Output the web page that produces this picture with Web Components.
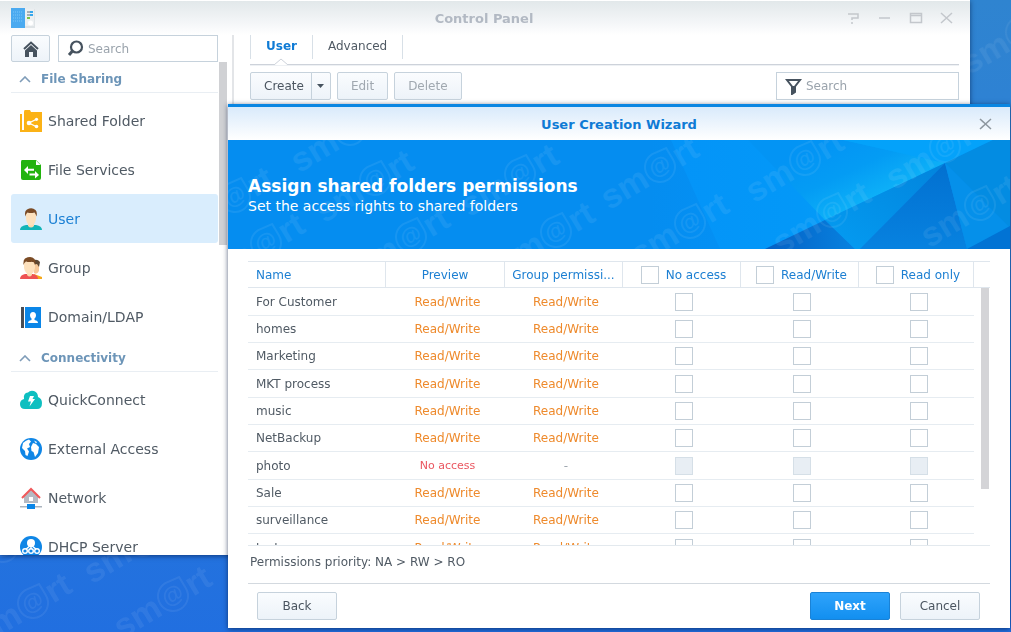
<!DOCTYPE html>
<html lang="en">
<head>
<meta charset="utf-8">
<meta name="viewport" content="width=device-width, initial-scale=1">
<title>Control Panel</title>
<style>
  html, body { margin: 0; height: 100%; }
  body {
    font-family: "DejaVu Sans", Verdana, sans-serif;
    font-size: 12px;
    color: #505a64;
    overflow: hidden;
  }
</style>
</head>
<body>
<desk-top>
  <control-panel>
    <side-group slot="nav" label="File Sharing">
      <side-item icon="folder">Shared Folder</side-item>
      <side-item icon="services">File Services</side-item>
      <side-item icon="user" active>User</side-item>
      <side-item icon="group">Group</side-item>
      <side-item icon="domain">Domain/LDAP</side-item>
    </side-group>
    <side-group slot="nav" label="Connectivity">
      <side-item icon="cloud">QuickConnect</side-item>
      <side-item icon="globe">External Access</side-item>
      <side-item icon="network">Network</side-item>
      <side-item icon="dhcp">DHCP Server</side-item>
    </side-group>
    <tab-strip slot="main"></tab-strip>
    <tool-bar slot="main"></tool-bar>
  </control-panel>
  <wizard-dialog>
    <wizard-banner slot="banner">
      <span slot="title">Assign shared folders permissions</span>
      <span slot="text">Set the access rights to shared folders</span>
    </wizard-banner>
    <permission-table></permission-table>
    <span slot="note">Permissions priority: NA &gt; RW &gt; RO</span>
    <ui-button slot="back" wide>Back</ui-button>
    <ui-button slot="next" wide primary>Next</ui-button>
    <ui-button slot="next" wide>Cancel</ui-button>
  </wizard-dialog>
</desk-top>

<script>
const define = (name, markup, setup) => {
  const template = document.createElement('template');
  template.innerHTML = markup;
  customElements.define(name, class extends HTMLElement {
    constructor() {
      super();
      this.attachShadow({ mode: 'open' }).append(template.content.cloneNode(true));
    }
    connectedCallback() {
      if (setup && !this.ready) setup(this, this.shadowRoot);
      this.ready = true;
    }
  });
};

const ICONS = {
  folder: '<path fill="#fbb216" d="M4 2q0-2 1-2h5l1 2h11v20H4z"/><path fill="#fbb216" d="M0 4h2v16h2v2H0z"/><path fill="#fff" opacity=".5" d="M2 4h1v15H2z"/><path stroke="#fff" stroke-width="1.3" d="M17 9l-8 4 8 4"/><g fill="#fff"><circle cx="9" cy="13" r="2.3"/><circle cx="16.500" cy="9.300" r="1.600"/><circle cx="16.500" cy="16.500" r="1.800"/></g>',
  services: '<path fill="#22b30e" d="M2 1h14l5 5v13q0 2-2 2H3q-2 0-2-2V3q0-2 1-2z"/><path fill="#fff" d="M16 1.500l4.500 4.500H16z"/><path fill="#fff" d="M4 11l4-4v2.800h6v2H8V15zM19 16l-4-4v2.600H9.500v2H15v3z"/>',
  user: '<path fill="#12b5b8" d="M0 22q0-4 6-5h10q6 1 6 5z"/><path fill="#fbd9ad" d="M8 14h6v4q-3 3-6 0z"/><path fill="#fde1bd" d="M6 5h10v6q-1 6-5 6.500Q7 17 6 11z"/><path fill="#7b4b25" d="M5.500 8.500Q4 3 7 1.500q5-2.500 8.500.5Q17.500 4 16.500 8.500q-1-3-2-4-4 1-7 0-1.500 1-2 4z"/>',
  group: '<path fill="#f5a91c" d="M14 17l8 3v2h-8z"/><path fill="#f6c899" d="M12 6h7v8q-2 4-5 2z"/><path fill="#5b4633" d="M12 4q5-3 8 1l-1 5-2-3-5 1z"/><path fill="#ee5252" d="M0 22q0-4 5-5h8q5 1 5 5z"/><path fill="#fbd9ad" d="M7 14h5v4q-2.500 3-5 0z"/><path fill="#fde1bd" d="M4 5h11v6q-1 5.500-5.500 6.500Q5 16.500 4 11z"/><path fill="#7b4b25" d="M3.500 8Q3 3 5 1.500q6-3 9.500.5Q16 4 15 8q-1-3-2-3.500-4 1-7 0Q4 5.500 3.500 8z"/>',
  domain: '<path fill="#484d54" d="M1 1h3v21H1z"/><path fill="#0a86e8" d="M5 1h16v21H5z"/><path fill="#fff" d="M13 6q3 0 3 3.500 0 2-1.500 3v1.500q3.500.5 3.500 3H8q0-2.500 3.500-3v-1.500q-1.500-1-1.500-3Q10 6 13 6z"/>',
  cloud: '<path fill="#0ebfc0" d="M5 20q-5 0-5-5 0-4 4-5Q3 4 8 3.500 10 1 14 2q4 1.500 4 6 4 1.500 4 6 0 6-5 6z"/><path fill="#fff" d="M10 7h4l-1.500 3H15l-5.500 7.500 1.500-5H8z"/>',
  globe: '<circle cx="11" cy="11" r="11" fill="#0f86e6"/><path fill="#fff" d="M3 5q3-3 6-3.500l2 2L9 6l1 3-3 1.500 2 3-1.500 4.500-2-1-.5-4L2 10zM13 5l3 1 3 3-1 6-3 4-1.500-5-2-1-.5-4zM14 2.500l3 1.500-1 1.500z"/>',
  network: '<path fill="#b5bac3" d="M4 8l7-6 7 6v8H4z"/><path fill="#fff" d="M9 10h4v4H9z"/><path fill="none" stroke="#f0595b" stroke-width="2" d="M2 11l9-9 9 9"/><path fill="#aab4be" d="M0 19h22v1.500H0z"/><path fill="#0a86e8" d="M7 17h8v5H7z"/>',
  dhcp: '<circle cx="11" cy="11" r="11" fill="#0f86e6"/><path fill="none" stroke="#fff" stroke-width="1.500" d="M11 8v8M11 9l-6 5M11 9l6 5"/><g fill="#fff"><circle cx="11" cy="7" r="4"/></g><g fill="#0f86e6" stroke="#fff" stroke-width="1.400"><circle cx="5" cy="15" r="2.300"/><circle cx="11" cy="15" r="2.300"/><circle cx="17" cy="15" r="2.300"/></g>'
};

/* Brand mark laid over a blue surface; "at" lists the centre of each mark. */
define('brand-pattern', `
  <style>
    :host { position: absolute; inset: 0; overflow: hidden; pointer-events: none; }
    svg { display: block; width: 100%; height: 100%; }
    text { font: bold 34px "Liberation Sans", Arial, sans-serif; }
    .at { font-size: 22px; }
  </style>
  <svg aria-hidden="true"><g fill="#fff" opacity=".07"></g></svg>`,
(host, root) => {
  root.querySelector('g').innerHTML = host.getAttribute('at').split(' ').map(point =>
    `<g transform="translate(${point}) rotate(-31)"><text x="-17" y="11" text-anchor="end">sm</text><text class="at" x="0" y="6" text-anchor="middle">@</text><path d="M0-15L15-13V0A15 15 0 1 1 0-15z" fill="none" stroke="#fff" stroke-width="2"/><text x="17" y="11">rt</text></g>`).join('');
});

define('desk-top', `
  <style>
    :host { display: block; position: relative; height: 100vh; overflow: hidden;
      background: linear-gradient(#2f84d0, #2d80d6 30%, #216fe0); }
  </style>
  <brand-pattern at="3,547 33,603 143,541 173,596 1021,32"></brand-pattern>
  <slot></slot>`);

define('ui-button', `
  <style>
    :host { display: block; }
    button { box-sizing: border-box; height: 28px; margin: 0; padding: 0 13px; display: block; width: 100%;
      font: inherit; font-size: 12px; color: #4b5560; border: 1px solid #c6d2dc; border-radius: 2px;
      background: linear-gradient(#fafcfe, #edf3f9); white-space: nowrap; }
    button:disabled { color: #a0a8b0; }
    :host([wide]) { width: 80px; }
    :host([primary]) button { color: #fff; font-weight: bold; border-color: #1a82d6;
      background: linear-gradient(#2fa3fb, #128ff0); }
  </style>
  <button type="button"><slot></slot></button>`,
(host, root) => { root.querySelector('button').disabled = host.hasAttribute('disabled'); });

define('side-item', `
  <style>
    :host { display: block; }
    a { display: flex; align-items: center; gap: 6px; height: 49px; padding-left: 9px; border-radius: 3px;
      font-size: 14px; color: #505a64; text-decoration: none; white-space: nowrap; }
    svg { width: 22px; height: 22px; flex: none; }
    :host([active]) a { background: #d9edfd; color: #1c80d4; }
  </style>
  <a href="#"><svg viewBox="0 0 22 22" fill="none" aria-hidden="true"></svg><slot></slot></a>`,
(host, root) => { root.querySelector('svg').innerHTML = ICONS[host.getAttribute('icon')]; });

define('side-group', `
  <style>
    :host { display: block; }
    h2 { box-sizing: border-box; display: flex; align-items: center; gap: 10px; height: 31px; margin: 0 0 3px;
      padding: 4px 0 0 8px; border-bottom: 1px solid #e9eef3; font-size: 12px; color: #6d95b8; }
    svg { width: 12px; height: 7px; }
  </style>
  <h2><svg viewBox="0 0 12 7" fill="none" aria-hidden="true"><path d="M1 6l5-5 5 5" stroke="#7f9cb8" stroke-width="1.600"/></svg><span></span></h2>
  <nav><slot></slot></nav>`,
(host, root) => { root.querySelector('span').textContent = host.getAttribute('label'); });

define('search-box', `
  <style>
    :host { display: block; }
    label { box-sizing: border-box; display: flex; align-items: center; gap: 4px; height: 27px;
      padding: 0 8px; border: 1px solid #c6d2dc; background: #fff; }
    :host([icon=filter]) label { height: 28px; }
    svg { width: 17px; height: 17px; flex: none; }
    input { flex: 1; min-width: 0; border: 0; padding: 0; outline: 0; background: none; font: inherit; font-size: 12px; color: #505a64; }
    input::placeholder { color: #9aa3ac; opacity: 1; }
  </style>
  <label><svg viewBox="0 0 17 17" fill="none" stroke="#46525e" aria-hidden="true"></svg><input type="text" placeholder="Search" aria-label="Search"></label>`,
(host, root) => {
  root.querySelector('svg').innerHTML = host.getAttribute('icon') === 'filter'
    ? '<path stroke-width="2" d="M2 2h13l-5 6.500V14l-3 2V8.500z" fill="none"/><path fill="#46525e" stroke="none" d="M7 8h3v6l-3 2z"/>'
    : '<circle cx="9.500" cy="7" r="5.500" stroke-width="2.200"/><path stroke-width="3" d="M5.500 11L2 15"/>';
});

define('tab-strip', `
  <style>
    :host { display: block; position: relative; border-bottom: 1px solid #cdd2da; box-shadow: 0 1px 0 #eef1f4; height: 29px; }
    div { display: flex; height: 24px; }
    a { padding: 2px 15px; border-right: 1px solid #d8e0e7; font-size: 12px; line-height: 18px; color: #505a64; text-decoration: none; }
    a:first-child { border-left: 1px solid #d8e0e7; color: #0f7bd5; font-weight: bold; }
    svg { position: absolute; left: 24px; bottom: -1px; width: 14px; height: 7px; }
  </style>
  <div role="tablist"><a href="#" role="tab" aria-selected="true">User</a><a href="#" role="tab">Advanced</a></div>
  <svg viewBox="0 0 14 7" aria-hidden="true"><path fill="#fff" stroke="#cdd2da" d="M0 7l7-6 7 6"/></svg>`);

define('tool-bar', `
  <style>
    :host { display: flex; gap: 6px; padding-top: 7px; }
    .split { display: flex; }
    .split button { box-sizing: border-box; height: 28px; margin: 0; border: 1px solid #c6d2dc; padding: 0 7px 0 13px;
      background: linear-gradient(#fafcfe, #edf3f9); font: inherit; font-size: 12px; color: #4b5560; border-radius: 2px 0 0 2px; }
    .split .more { width: 20px; margin-left: -1px; padding: 0; border-radius: 0 2px 2px 0; display: grid; place-items: center; }
    .split svg { width: 7px; height: 4px; display: block; }
    search-box { width: 183px; margin-left: auto; }
  </style>
  <div class="split"><button type="button">Create</button><button class="more" type="button" aria-label="More create options"><svg viewBox="0 0 7 4"><path fill="#46525e" d="M0 0h7L3.500 4z"/></svg></button></div>
  <ui-button disabled>Edit</ui-button>
  <ui-button disabled>Delete</ui-button>
  <search-box icon="filter"></search-box>`);

define('control-panel', `
  <style>
    :host { position: absolute; inset: 0 41px 77px 0; display: flex; flex-direction: column; box-sizing: border-box;
      border-top: 1px solid #fff; background: linear-gradient(#e2e8ea, #f4f6f8 22px, #fff 34px);
      box-shadow: 0 1px 5px rgba(0, 20, 60, .6); }
    header { display: flex; align-items: center; height: 34px; flex: none; padding: 0 16px 0 11px; }
    .logo { width: 24px; height: 20px; }
    h1 { flex: 1; margin: 0; padding-left: 86px; text-align: center; font-size: 13px; color: #b2b9c3; }
    .tools { display: flex; gap: 17px; }
    .tools button { width: 14px; height: 14px; padding: 0; border: 0; background: none; display: block; }
    .tools svg { width: 14px; height: 14px; display: block; }
    .body { flex: 1; min-height: 0; display: flex; }
    aside { width: 217px; flex: none; display: flex; flex-direction: column; padding-left: 11px; }
    .find { display: flex; gap: 8px; padding-right: 10px; flex: none; }
    .find search-box { flex: 1; min-width: 0; }
    .home { box-sizing: border-box; width: 39px; flex: none; height: 27px; padding: 0; border: 1px solid #c6d2dc; border-radius: 2px;
      background: linear-gradient(#fafcfe, #edf3f9); display: grid; place-items: center; }
    .home svg { width: 16px; height: 16px; }
    .scroll { flex: 1; min-height: 0; display: flex; overflow: hidden; gap: 1px; }
    .groups { flex: 1; }
    .bar { width: 8px; height: 183px; margin-right: 1px; background: #d0d1d4; }
    main { flex: 1; min-width: 0; margin-left: 4px; border-left: 2px solid #e3e5e8; padding: 0 11px 0 16px; }
  </style>
  <header>
    <svg class="logo" viewBox="0 0 24 20" aria-hidden="true"><path fill="#dfe4e7" d="M14 1h10v19H14z"/><path fill="#eceff1" d="M14 1h9v17H14z"/><path fill="#4baaf0" d="M0 0h14v20H0z"/><path fill="none" stroke="#7cc6f8" stroke-dasharray="1 1" d="M2 4h10M2 7h10M2 10h10M2 13h10"/><path stroke="#67737c" d="M16 4h3M16 7h3"/><path stroke="#36a7ec" stroke-width="2" d="M19 4h3M19 7h3"/><path stroke="#7cc242" stroke-width="2" d="M16 10h3"/><circle cx="19.500" cy="15" r="2.500" fill="#fff"/></svg>
    <h1>Control Panel</h1>
    <div class="tools">
      <button type="button" aria-label="Help"><svg viewBox="0 0 14 14" fill="none" stroke="#c3c7cc" stroke-width="1.500"><path d="M1 3h10v4H5v2M5 11v2"/></svg></button>
      <button type="button" aria-label="Minimize"><svg viewBox="0 0 14 14" fill="none" stroke="#c3c7cc" stroke-width="1.500"><path d="M1 7h11"/></svg></button>
      <button type="button" aria-label="Maximize"><svg viewBox="0 0 14 14" fill="none" stroke="#c3c7cc" stroke-width="1.500"><path d="M1.500 2.500h11v9h-11zM1.500 4.500h11"/></svg></button>
      <button type="button" aria-label="Close"><svg viewBox="0 0 14 14" fill="none" stroke="#c3c7cc" stroke-width="1.500"><path d="M1 2l11 10M12 2L1 12"/></svg></button>
    </div>
  </header>
  <div class="body">
    <aside>
      <div class="find">
        <button class="home" type="button" aria-label="Home"><svg viewBox="0 0 16 16" aria-hidden="true"><path fill="none" stroke="#46525e" stroke-width="2" d="M1 8l7-6.500L15 8"/><path fill="#46525e" d="M2 9.500L8 4l6 5.500V16h-4v-5H6v5H2z"/></svg></button>
        <search-box></search-box>
      </div>
      <div class="scroll"><div class="groups"><slot name="nav"></slot></div><div class="bar"></div></div>
    </aside>
    <main><slot name="main"></slot></main>
  </div>`);

define('wizard-banner', `
  <style>
    :host { display: block; position: relative; height: 109px; overflow: hidden; background: #058df0; color: #fff; }
    .art { position: absolute; right: 0; top: 0; width: 360px; height: 109px; }
    .copy { position: relative; padding: 36px 20px 0; }
    h2, p { margin: 0; line-height: 20px; }
    h2 { font-size: 17px; }
    p { font-size: 14px; }
  </style>
  <svg class="art" viewBox="422 0 360 109" aria-hidden="true">
    <defs>
      <linearGradient id="z" x1="0" y1="0" x2="1" y2="0"><stop offset="0" stop-color="#058df0"/><stop offset="1" stop-color="#0490f4"/></linearGradient>
      <linearGradient id="a" x1="0" y1="0" x2="1" y2="0"><stop offset="0" stop-color="#0494f8"/><stop offset=".4" stop-color="#0398f8"/><stop offset=".8" stop-color="#06a8f6"/><stop offset="1" stop-color="#06a0f4"/></linearGradient>
      <linearGradient id="b" gradientUnits="userSpaceOnUse" x1="600" y1="0" x2="632" y2="68"><stop offset="0" stop-color="#0394f4"/><stop offset=".5" stop-color="#049cf4"/><stop offset="1" stop-color="#0eb2f8"/></linearGradient>
      <linearGradient id="c" x1="0" y1="0" x2="0" y2="1"><stop offset="0" stop-color="#0270d0"/><stop offset="1" stop-color="#0782e0"/></linearGradient>
      <linearGradient id="d" x1="0" y1="1" x2="1" y2="0"><stop offset="0" stop-color="#049cf2"/><stop offset="1" stop-color="#0284dc"/></linearGradient>
      <linearGradient id="e" x1="0" y1="0" x2="1" y2="0"><stop offset="0" stop-color="#0560c4"/><stop offset="1" stop-color="#0782e0"/></linearGradient>
    </defs>
    <path fill="url(#z)" d="M422 0h22l48 109h-70z"/>
    <path fill="url(#a)" d="M443 0h322l-48 23-180 86h-45z"/>
    <path fill="url(#b)" d="M520 0h95l102 23-120 57z"/>
    <path fill="#04a2fa" d="M615 0h150l-48 23z"/>
    <path fill="url(#e)" d="M537 109l60-29 30 29z"/>
    <path fill="url(#d)" d="M597 80l120-57-85 86h-5z"/>
    <path fill="url(#c)" d="M717 23l-85 86h107z"/>
    <path fill="#038ce2" d="M717 23l48-23h17v88z"/>
    <path fill="#0590ea" d="M717 23l65 65-43 21z"/>
    <path fill="#0173d4" d="M739 109l43-23v23z"/>
  </svg>
  <brand-pattern at="7,57 147,40 292,34 432,27 577,20 717,7 38,103 183,97 328,92 462,83 604,72 752,65 122,-10"></brand-pattern>
  <div class="copy"><h2><slot name="title"></slot></h2><p><slot name="text"></slot></p></div>`);

define('permission-table', `
  <style>
    :host { display: block; overflow: hidden; position: relative; }
    table { width: 100%; table-layout: fixed; border-spacing: 0; font-size: 12px; }
    .v1 { width: 119px; } .v2 { width: 118px; } .v3 { width: 115px; } .end { width: 16px; }
    th, td { box-sizing: border-box; padding: 0; height: 27px; text-align: center; white-space: nowrap; overflow: hidden; }
    th { border: solid #dfe6ed; border-width: 1px 1px 1px 0; font-weight: normal; color: #1c7fd2; text-overflow: ellipsis; }
    th:last-child { border-right: 0; }
    td { border-bottom: 1px solid #e6ecf1; padding-left: 4px; color: #ee8a2c; }
    tbody tr:nth-child(3n+1) td { height: 28px; }
    td:last-child { border-bottom: 0; }
    th:first-child, tbody th { text-align: left; padding-left: 8px; }
    tbody th { border-width: 0 0 1px; border-color: #e6ecf1; color: #505a64; }
    td.deny { color: #ea5660; font-size: 11px; }
    td.none { color: #a0a8b0; }
    label { display: flex; align-items: center; justify-content: center; gap: 7px; padding-left: 4px; }
    input { appearance: none; box-sizing: border-box; width: 18px; height: 18px; margin: 0; border: 1px solid #c3ced7; background: #fff; display: block; }
    td input { margin: 0 auto; }
    input:disabled { background: #e8eef4; border-color: #d5dfe7; }
    input:checked { background: #1c7fd2; }
    .bar { position: absolute; right: 1px; top: 27px; width: 8px; height: 201px; background: #d4d4d7; }
  </style>
  <table>
    <colgroup><col><col class="v1"><col class="v2"><col class="v2"><col class="v2"><col class="v3"><col class="end"></colgroup>
    <thead><tr><th>Name</th><th>Preview</th><th>Group permissi...</th><th><label><input type="checkbox">No access</label></th><th><label><input type="checkbox">Read/Write</label></th><th><label><input type="checkbox">Read only</label></th><th></th></tr></thead>
    <tbody></tbody>
  </table>
  <div class="bar"></div>`,
(host, root) => {
  const names = ['For Customer', 'homes', 'Marketing', 'MKT process', 'music', 'NetBackup', 'photo', 'Sale', 'surveillance', 'test'];
  root.querySelector('tbody').innerHTML = names.map(name => {
    const locked = name === 'photo';
    const box = kind => `<td><input type="checkbox" aria-label="${name}: ${kind}"${locked ? ' disabled' : ''}></td>`;
    const cells = locked ? '<td class="deny">No access</td><td class="none">-</td>' : '<td>Read/Write</td><td>Read/Write</td>';
    return `<tr><th scope="row">${name}</th>${cells}${box('No access')}${box('Read/Write')}${box('Read only')}<td></td></tr>`;
  }).join('');
});

define('wizard-dialog', `
  <style>
    :host { position: absolute; inset: 104px 1px 4px 228px; display: flex; flex-direction: column; box-sizing: border-box;
      border-top: 3px solid #0a86e2; background: #fff; box-shadow: 0 1px 5px rgba(0, 20, 60, .65); }
    header { display: flex; align-items: center; flex: none; height: 33px; padding: 0 17px; background: linear-gradient(#d9eafb, #fff); }
    h1 { flex: 1; margin: 0; padding: 2px 0 0 14px; text-align: center; font-size: 13px; color: #0f7bd5; }
    header button { width: 14px; height: 14px; padding: 0; border: 0; background: none; }
    header svg { display: block; width: 14px; height: 14px; }
    .content { flex: 1; min-height: 0; margin: 12px 20px 0; border-bottom: 1px solid #e3e9ee; overflow: hidden; }
    p { flex: none; margin: 0 20px; padding: 8px 2px 13px; line-height: 16px; font-size: 12px; }
    footer { flex: none; display: flex; gap: 10px; margin: 0 20px; padding: 8px 10px 8px 9px; border-top: 1px solid #d3d9df; }
    .space { flex: 1; }
  </style>
  <header><h1>User Creation Wizard</h1><button type="button" aria-label="Close"><svg viewBox="0 0 14 14" fill="none" stroke="#8d979f" stroke-width="1.500"><path d="M1 2l11 10M12 2L1 12"/></svg></button></header>
  <slot name="banner"></slot>
  <div class="content"><slot></slot></div>
  <p><slot name="note"></slot></p>
  <footer><slot name="back"></slot><div class="space"></div><slot name="next"></slot></footer>`);
</script>
</body>
</html>
